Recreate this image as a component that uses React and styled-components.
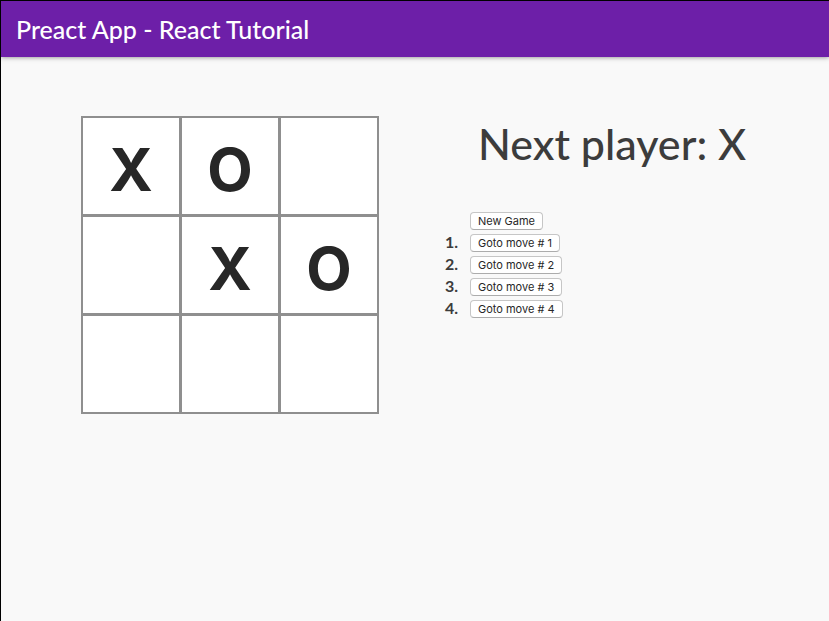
import React from "react";
import styled, { createGlobalStyle } from "styled-components";

const GlobalStyle = createGlobalStyle`
  *, *::before, *::after {
    box-sizing: border-box;
  }
  html {
    height: 100%;
    background: #f9f9f9;
  }
  body {
    min-height: 100%;
    margin: 0;
    color: #3c3c3c;
    font-family: Futura, Lato, sans-serif;
  }
`;

const Page = styled.div`
  min-height: 100vh;
  border-top: 1px solid #000;
  border-left: 1px solid #000;
`;

const Header = styled.header`
  display: flex;
  align-items: center;
  height: 56px;
  padding: 0 15px;
  background: #6d1fa8;
  box-shadow: 0 0 5px rgba(0, 0, 0, 0.5);
`;

const Title = styled.h1`
  margin: 0;
  color: #fff;
  font-size: 25px;
  font-weight: 500;
  line-height: 56px;
`;

const Game = styled.main`
  display: flex;
  align-items: flex-start;
  gap: 63px;
  padding: 59px 80px;
`;

const Board = styled.div`
  display: grid;
  flex: none;
  grid-template-columns: repeat(3, 96px);
  grid-auto-rows: 96px;
  gap: 3px;
  padding: 2px;
  background: #8f8f8f;
`;

const Square = styled.button`
  display: flex;
  align-items: center;
  justify-content: center;
  margin: 0;
  padding: 8px 0 0;
  border: 0;
  background: #fff;
  color: #272727;
  font-family: Inter, sans-serif;
  font-size: 59px;
  font-weight: 700;
  line-height: 64px;
`;

const Info = styled.section`
  flex: 1;
  min-width: 0;
`;

const Status = styled.h2`
  margin: 0;
  padding-left: 36px;
  font-size: 43px;
  font-weight: 500;
  line-height: 56px;
  white-space: nowrap;
`;

const Moves = styled.ol`
  margin: 38px 0 0;
  padding: 0;
  list-style: none;
`;

const Move = styled.li`
  display: grid;
  grid-template-columns: 16px auto;
  justify-content: start;
  align-items: center;
  column-gap: 12px;
  height: 22px;
`;

const MoveNumber = styled.span`
  padding-bottom: 2px;
  font-size: 16px;
  font-weight: 700;
  line-height: 20px;
  text-align: right;
`;

const MoveButton = styled.button`
  grid-column: 2;
  height: 18px;
  margin: 0;
  padding: 0 7px;
  border: 1px solid #c6c6c6;
  border-bottom-color: #acacac;
  border-radius: 4px;
  background: #fff;
  color: #272727;
  font-family: Inter, sans-serif;
  font-size: 11px;
  line-height: 16px;
  white-space: nowrap;
`;

const squares = ["X", "O", "", "", "X", "O", "", "", ""];
const moves = ["New Game", "Goto move # 1", "Goto move # 2", "Goto move # 3", "Goto move # 4"];

export default function App() {
  return (
    <>
      <GlobalStyle />
      <Page>
        <Header>
          <Title>Preact App - React Tutorial</Title>
        </Header>
        <Game>
          <Board>
            {squares.map((mark, index) => (
              <Square key={index} type="button" aria-label={`Square ${index + 1} ${mark || "empty"}`}>
                {mark}
              </Square>
            ))}
          </Board>
          <Info>
            <Status>Next player: X</Status>
            <Moves>
              {moves.map((label, index) => (
                <Move key={label}>
                  {index > 0 && <MoveNumber>{index}.</MoveNumber>}
                  <MoveButton type="button">{label}</MoveButton>
                </Move>
              ))}
            </Moves>
          </Info>
        </Game>
      </Page>
    </>
  );
}
